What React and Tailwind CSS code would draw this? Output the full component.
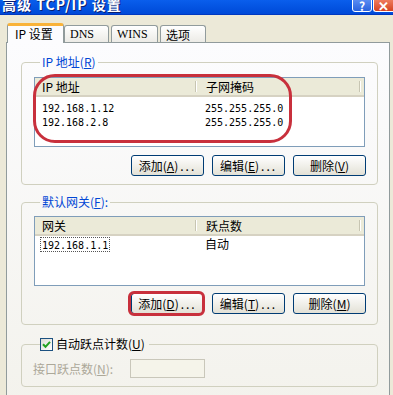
import React from 'react';

const cjk = { fontFamily: '"Noto Sans CJK SC", "Liberation Sans", sans-serif' };

function Key({ k }) {
  return (
    <span>
      (<span className="underline underline-offset-1">{k}</span>)
    </span>
  );
}

function XpButton({ label, k, dots }) {
  return (
    <div className="w-[73px] h-[21px] rounded-[3px] border border-[#003C74] bg-gradient-to-b from-white to-[#E3E1D6] flex items-center justify-center text-[12px] leading-none text-black">
      <span>{label}</span>
      <Key k={k} />
      {dots && <span className="tracking-[2px] ml-[2px]">...</span>}
    </div>
  );
}

function ListHeader({ a, b }) {
  return (
    <div className="h-[19px] flex bg-[#EBEAD8] border-b-[2px] border-[#D6D2C2] text-[12px] leading-[17px]">
      <div className="w-[162px] pl-[7px] flex justify-between">
        <span>{a}</span>
        <span className="w-px my-[3px] bg-[#C7C5B2] border-r border-white box-content" />
      </div>
      <div className="w-[164px] pl-[9px] flex justify-between">
        <span>{b}</span>
        <span className="w-px my-[3px] bg-[#C7C5B2] border-r border-white box-content" />
      </div>
    </div>
  );
}

function Mono({ children }) {
  return <span className="font-['DejaVu_Sans_Mono',monospace] text-[10px]">{children}</span>;
}

export default function App() {
  return (
    <div className="w-[393px] h-[395px] overflow-hidden bg-[#ECE9D8] text-black" style={cjk}>
      {/* title bar, top cut off */}
      <div className="h-[15px] bg-gradient-to-b from-[#0A5EEC] to-[#0049D8] border-b border-[#0038C0] flex justify-between overflow-hidden">
        <span className="-mt-[5px] ml-[2px] text-white font-bold text-[14px] leading-[18px] tracking-[1px] [text-shadow:1px_1px_0_#0A1E70]">
          高级 TCP/IP 设置
        </span>
        <div className="flex items-start gap-[1px]">
          <div className="w-[20px] h-[13px] -mt-[1px] rounded-b-[3px] border border-white bg-gradient-to-b from-[#5A8CF2] to-[#2A62DE] text-white text-[12px] font-bold leading-[12px] text-center">
            ?
          </div>
          <div className="w-[20px] h-[13px] -mt-[1px] rounded-bl-[3px] border border-white border-r-0 bg-gradient-to-b from-[#EE7A5C] to-[#D5421F] text-white text-[13px] font-bold leading-[12px] text-center">
            ✕
          </div>
        </div>
      </div>

      {/* tabs */}
      <div className="mt-[7px] pl-[7px] h-[20px] flex items-end relative z-10 text-[12px]">
        <div className="w-[57px] h-[20px] -mb-px bg-[#FCFCFE] border border-[#919B9C] border-b-0 rounded-t-[3px] border-t-[3px] border-t-[#F9B33A] pl-[7px] leading-[15px]">
          IP 设置
        </div>
        <div className="w-[45px] h-[17px] bg-gradient-to-b from-white to-[#ECEBE6] border border-[#919B9C] border-b-0 rounded-t-[3px] pl-[5px] leading-[17px] font-['Liberation_Serif',serif]">
          DNS
        </div>
        <div className="ml-[2px] w-[47px] h-[17px] bg-gradient-to-b from-white to-[#ECEBE6] border border-[#919B9C] border-b-0 rounded-t-[3px] pl-[5px] leading-[17px] font-['Liberation_Serif',serif]">
          WINS
        </div>
        <div className="ml-[2px] w-[46px] h-[17px] bg-gradient-to-b from-white to-[#ECEBE6] border border-[#919B9C] border-b-0 rounded-t-[3px] pl-[5px] leading-[17px]">
          选项
        </div>
      </div>

      {/* tab pane */}
      <div className="ml-[6px] w-[384px] h-[370px] border border-[#919B9C] bg-gradient-to-b from-[#FCFCFE] to-[#F3F2EC] pt-[11px]">
        {/* IP addresses */}
        <fieldset className="ml-[14px] w-[357px] border border-[#D0D0BF] rounded-[4px] px-[12px] pb-[8px]">
          <legend className="ml-[6px] px-[2px] text-[12px] leading-[16px] text-[#0046D5]">
            IP 地址<Key k="R" />
          </legend>
          <div className="relative mt-[7px]">
            <div className="h-[70px] border border-[#7F9DB9] bg-white">
              <ListHeader a="IP 地址" b="子网掩码" />
              <div className="h-[14px] mt-[1px] flex items-center">
                <div className="w-[162px] pl-[7px]"><Mono>192.168.1.12</Mono></div>
                <div className="pl-[8px]"><Mono>255.255.255.0</Mono></div>
              </div>
              <div className="h-[14px] flex items-center">
                <div className="w-[162px] pl-[7px]"><Mono>192.168.2.8</Mono></div>
                <div className="pl-[8px]"><Mono>255.255.255.0</Mono></div>
              </div>
            </div>
            <div className="absolute -left-[1px] -top-[3px] w-[259px] h-[69px] border-[3px] border-[#C8303C] rounded-[22px]" />
          </div>
          <div className="mt-[8px] flex justify-end gap-[8px] -mr-[1px]">
            <XpButton label="添加" k="A" dots />
            <XpButton label="编辑" k="E" dots />
            <XpButton label="删除" k="V" />
          </div>
        </fieldset>

        {/* default gateways */}
        <fieldset className="mt-[9px] ml-[14px] w-[357px] border border-[#D0D0BF] rounded-[4px] px-[12px] pb-[10px]">
          <legend className="ml-[6px] px-[2px] text-[12px] leading-[16px] text-[#0046D5]">
            默认网关<Key k="F" />:
          </legend>
          <div className="mt-[6px] h-[70px] border border-[#7F9DB9] bg-white">
            <ListHeader a="网关" b="跃点数" />
            <div className="h-[14px] mt-[1px] flex items-center text-[12px]">
              <div className="w-[162px] pl-[5px]">
                <span className="border border-dotted border-[#555] px-[1px] leading-[11px] inline-block">
                  <Mono>192.168.1.1</Mono>
                </span>
              </div>
              <div className="pl-[8px] leading-[14px]">自动</div>
            </div>
          </div>
          <div className="mt-[7px] flex justify-end gap-[8px] -mr-[1px]">
            <div className="relative">
              <XpButton label="添加" k="D" dots />
              <div className="absolute -left-[3px] -top-[2px] w-[77px] h-[25px] border-[3px] border-[#C8303C] rounded-[6px]" />
            </div>
            <XpButton label="编辑" k="T" dots />
            <XpButton label="删除" k="M" />
          </div>
        </fieldset>

        {/* automatic metric */}
        <fieldset className="mt-[11px] ml-[14px] w-[357px] border border-[#D0D0BF] rounded-[4px] px-[11px] pb-[8px]">
          <legend className="ml-[7px] pr-[4px] text-[12px] leading-[16px] flex items-center">
            <span className="w-[13px] h-[13px] border border-[#1C5180] bg-gradient-to-br from-[#DCDCD7] to-white flex items-center justify-center">
              <svg width="9" height="9" viewBox="0 0 9 9">
                <path d="M1 4.2 L3.5 6.8 L8 1.8" fill="none" stroke="#21A121" strokeWidth="2" />
              </svg>
            </span>
            <span className="ml-[3px]">自动跃点计数<Key k="U" /></span>
          </legend>
          <div className="mt-[7px] flex items-center">
            <span className="text-[12px] leading-[16px] text-[#ACA899] w-[97px]">
              接口跃点数<Key k="N" />:
            </span>
            <div className="w-[75px] h-[19px] border border-[#C9C7BA] bg-[#F5F4EA]" />
          </div>
        </fieldset>
      </div>
    </div>
  );
}
